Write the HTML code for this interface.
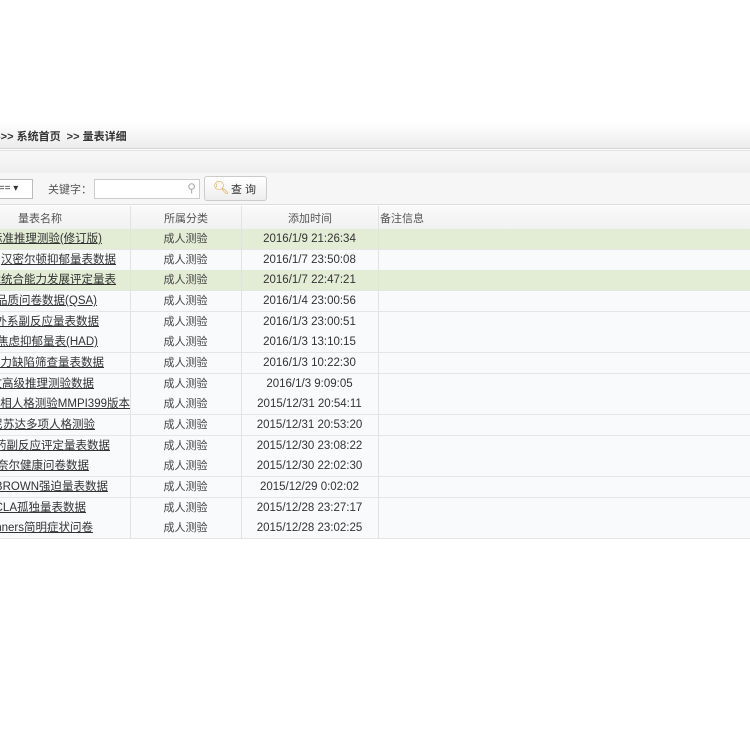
<!DOCTYPE html>
<html><head><meta charset="utf-8"><style>
body{margin:0;width:750px;height:750px;background:#fff;overflow:hidden;font-family:"Liberation Sans","Noto Sans CJK SC",sans-serif;color:#333;font-size:11px}
#w{position:absolute;left:0;top:0;width:750px;height:750px;overflow:hidden}
.a{position:absolute}
.bc{top:122px;left:0;width:750px;height:26px;background:linear-gradient(#fff,#ececec);border-bottom:1px solid #d4d4d4}
.bar2{top:150px;left:0;width:750px;height:22px;background:linear-gradient(#f8f8f8,#efefef);border-top:1px solid #e2e2e2;border-bottom:1px solid #ddd}
.tool{top:173px;left:0;width:750px;height:31px;background:#f6f6f6;border-bottom:1px solid #ddd}
.hd{top:206px;left:0;width:750px;height:23px;background:linear-gradient(#fafafa,#f1f1f1);border-bottom:1px solid #e0e0e0}
.row{left:0;width:750px;height:20px;border-bottom:1px solid #e6e6e6;background:#f9fafc}
.row span{top:0;line-height:20px;height:20px}
.g{background:#e3edd6}
.n{right:calc(750px - var(--e));white-space:nowrap;text-decoration:underline;color:#333;font-size:11.5px}
.c{left:130px;width:111px;text-align:center;color:#444}
.t{left:241px;width:137px;text-align:center;color:#333;font-size:11.5px}
.v{top:206px;width:1px;height:333px;background:#e2e2e2;z-index:5}
</style></head><body><div id="w">
<div class="a bc"><span class="a" style="left:-3px;top:6px;font-weight:bold;font-size:11px">-&gt;&gt; 系统首页 &nbsp;&gt;&gt; 量表详细</span></div>
<div class="a bar2"></div>
<div class="a tool">
 <div class="a" style="left:-5px;top:6px;width:36px;height:18px;border:1px solid #bbb;background:#fff;font-size:10px;line-height:18px;overflow:hidden">&nbsp;== ▾</div>
 <span class="a" style="left:48px;top:8px;color:#555">关键字：</span>
 <div class="a" style="left:94px;top:6px;width:104px;height:18px;border:1px solid #ccc;background:#fff"><span class="a" style="right:3px;top:1px;color:#aaa;font-size:12px">⚲</span></div>
 <div class="a" style="left:204px;top:3px;width:61px;height:23px;border:1px solid #ccc;border-radius:3px;background:linear-gradient(#fff,#eee)"><span class="a" style="left:8px;top:3px;color:#d9a030;font-size:13px">🔍︎</span><span class="a" style="left:26px;top:4px">查 询</span></div>
</div>
<div class="a hd">
 <span class="a" style="left:18px;top:4px;color:#555">量表名称</span>
 <span class="a" style="left:164px;top:4px;color:#555">所属分类</span>
 <span class="a" style="left:288px;top:4px;color:#555">添加时间</span>
 <span class="a" style="left:380px;top:4px;color:#555">备注信息</span>
</div>
<div class="a row g" style="top:229px"><span class="a n" style="--e:102px">瑞文标准推理测验(修订版)</span><span class="a c">成人测验</span><span class="a t">2016/1/9 21:26:34</span></div>
<div class="a row" style="top:250px"><span class="a n" style="--e:116px">汉密尔顿抑郁量表数据</span><span class="a c">成人测验</span><span class="a t">2016/1/7 23:50:08</span></div>
<div class="a row g" style="top:270px"><span class="a n" style="--e:116px">儿童感觉统合能力发展评定量表</span><span class="a c">成人测验</span><span class="a t">2016/1/7 22:47:21</span></div>
<div class="a row" style="top:291px"><span class="a n" style="--e:97px">意志品质问卷数据(QSA)</span><span class="a c">成人测验</span><span class="a t">2016/1/4 23:00:56</span></div>
<div class="a row" style="top:312px"><span class="a n" style="--e:99px">锥体外系副反应量表数据</span><span class="a c">成人测验</span><span class="a t">2016/1/3 23:00:51</span></div>
<div class="a row" style="top:332px"><span class="a n" style="--e:98px">医院焦虑抑郁量表(HAD)</span><span class="a c">成人测验</span><span class="a t">2016/1/3 13:10:15</span></div>
<div class="a row" style="top:353px"><span class="a n" style="--e:104px">注意力缺陷筛查量表数据</span><span class="a c">成人测验</span><span class="a t">2016/1/3 10:22:30</span></div>
<div class="a row" style="top:374px"><span class="a n" style="--e:94px">瑞文高级推理测验数据</span><span class="a c">成人测验</span><span class="a t">2016/1/3 9:09:05</span></div>
<div class="a row" style="top:394px"><span class="a n" style="--e:130px">明尼苏达多相人格测验MMPI399版本</span><span class="a c">成人测验</span><span class="a t">2015/12/31 20:54:11</span></div>
<div class="a row" style="top:415px"><span class="a n" style="--e:95px">明尼苏达多项人格测验</span><span class="a c">成人测验</span><span class="a t">2015/12/31 20:53:20</span></div>
<div class="a row" style="top:436px"><span class="a n" style="--e:110px">抗精神病药副反应评定量表数据</span><span class="a c">成人测验</span><span class="a t">2015/12/30 23:08:22</span></div>
<div class="a row" style="top:456px"><span class="a n" style="--e:89px">康奈尔健康问卷数据</span><span class="a c">成人测验</span><span class="a t">2015/12/30 22:02:30</span></div>
<div class="a row" style="top:477px"><span class="a n" style="--e:108px">Y-BROWN强迫量表数据</span><span class="a c">成人测验</span><span class="a t">2015/12/29 0:02:02</span></div>
<div class="a row" style="top:498px"><span class="a n" style="--e:86px">UCLA孤独量表数据</span><span class="a c">成人测验</span><span class="a t">2015/12/28 23:27:17</span></div>
<div class="a row" style="top:518px"><span class="a n" style="--e:93px">Conners简明症状问卷</span><span class="a c">成人测验</span><span class="a t">2015/12/28 23:02:25</span></div>
<div class="a v" style="left:130px"></div><div class="a v" style="left:241px"></div><div class="a v" style="left:378px"></div>
</div></body></html>
